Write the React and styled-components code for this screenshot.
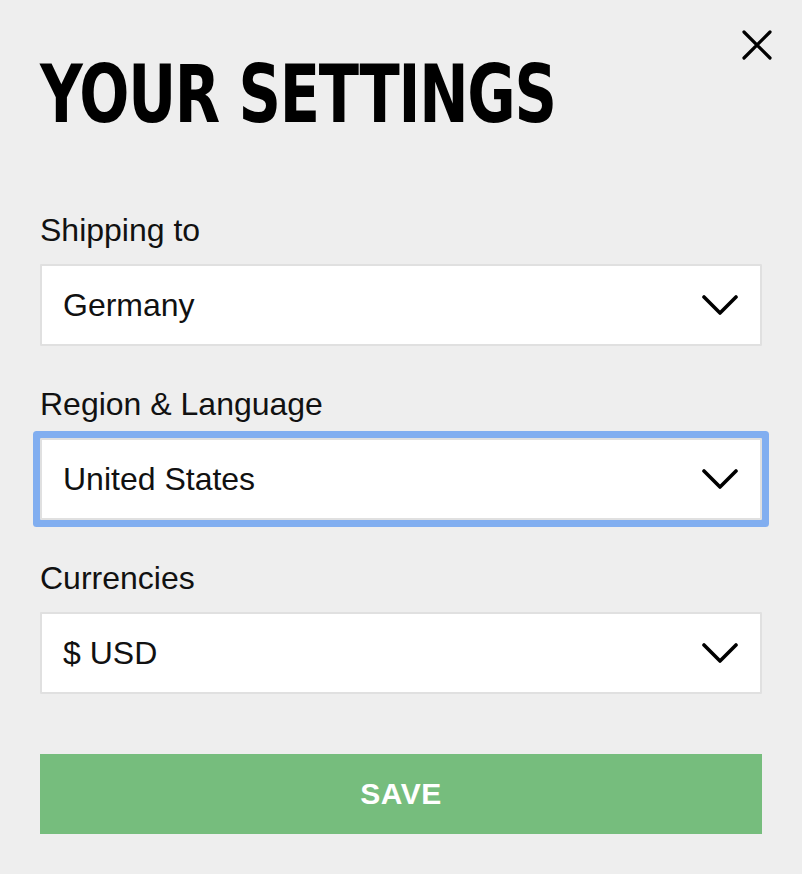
import styled, { createGlobalStyle } from "styled-components";

const Global = createGlobalStyle`
  html, body {
    margin:0;
    padding:0;
    background:#eeeeee;
  }
  body{
    font-family:"Liberation Sans", Arial, sans-serif;
    color:#111;
  }
`;

const Panel = styled.div`
  width:802px;
  box-sizing:border-box;
  padding:29px 40px 40px 40px;
`;

const Header = styled.div`
  display:flex;
  justify-content:space-between;
  align-items:flex-start;
  margin-right:-11px;
`;

const Title = styled.h1`
  margin:23px 0 0 0;
  font-family:"DejaVu Sans Condensed", "Liberation Sans", sans-serif;
  font-weight:700;
  font-size:81px;
  line-height:84px;
  letter-spacing:-1.5px;
  color:#000;
  white-space:nowrap;
  transform:scaleX(0.81);
  transform-origin:left center;
`;

const Close = styled.button`
  width:32px;
  height:32px;
  padding:0;
  border:none;
  background:none;
  cursor:pointer;

  svg{ display:block; }
`;

const Form = styled.form`
  margin-top:75px;
  display:flex;
  flex-direction:column;
`;

const Field = styled.div`
  display:flex;
  flex-direction:column;
  gap:15px;
  margin-bottom:39px;

  &:last-of-type{
    margin-bottom:60px;
  }
`;

const Label = styled.label`
  font-size:32px;
  line-height:38px;
  color:#111;
`;

const SelectWrap = styled.div`
  position:relative;
  height:82px;
  box-sizing:border-box;
  background:#fff;
  border:2px solid #e0e0e0;
  border-radius:1px;
  box-shadow:${props => props.$focused ? "0 0 0 7px #81aef0" : "none"};

  svg{
    position:absolute;
    right:22px;
    top:50%;
    transform:translateY(-50%);
    pointer-events:none;
  }
`;

const Select = styled.select`
  appearance:none;
  -webkit-appearance:none;
  width:100%;
  height:100%;
  border:none;
  outline:none;
  background:transparent;
  padding:0 70px 0 21px;
  font-family:"Liberation Sans", Arial, sans-serif;
  font-size:32px;
  color:#111;
`;

const Save = styled.button`
  height:80px;
  border:none;
  background:#76bd7d;
  color:#fff;
  font-family:"Liberation Sans", Arial, sans-serif;
  font-weight:700;
  font-size:30px;
  letter-spacing:0.5px;
  cursor:pointer;
`;

const Chevron = () => (
  <svg width="36" height="22" viewBox="0 0 36 22" fill="none">
    <path d="M2 3 L18 19 L34 3" stroke="#000" strokeWidth="3.6" strokeLinecap="round" strokeLinejoin="round" />
  </svg>
);

const fields = [
  { id: "ship", label: "Shipping to", value: "Germany", options: ["Germany", "France", "United Kingdom"] },
  { id: "region", label: "Region & Language", value: "United States", options: ["United States", "Deutschland", "France"], focused: true },
  { id: "cur", label: "Currencies", value: "$ USD", options: ["$ USD", "€ EUR", "£ GBP"] },
];

function App() {
  return (
    <Panel>
      <Global />
      <Header>
        <Title>YOUR SETTINGS</Title>
        <Close aria-label="Close">
          <svg width="32" height="32" viewBox="0 0 32 32">
            <path d="M3 3 L29 29 M29 3 L3 29" stroke="#000" strokeWidth="3.2" strokeLinecap="round" />
          </svg>
        </Close>
      </Header>
      <Form onSubmit={e => e.preventDefault()}>
        {fields.map(f => (
          <Field key={f.id}>
            <Label htmlFor={f.id}>{f.label}</Label>
            <SelectWrap $focused={f.focused}>
              <Select id={f.id} defaultValue={f.value}>
                {f.options.map(o => <option key={o}>{o}</option>)}
              </Select>
              <Chevron />
            </SelectWrap>
          </Field>
        ))}
        <Save type="submit">SAVE</Save>
      </Form>
    </Panel>
  );
}

export default App;
